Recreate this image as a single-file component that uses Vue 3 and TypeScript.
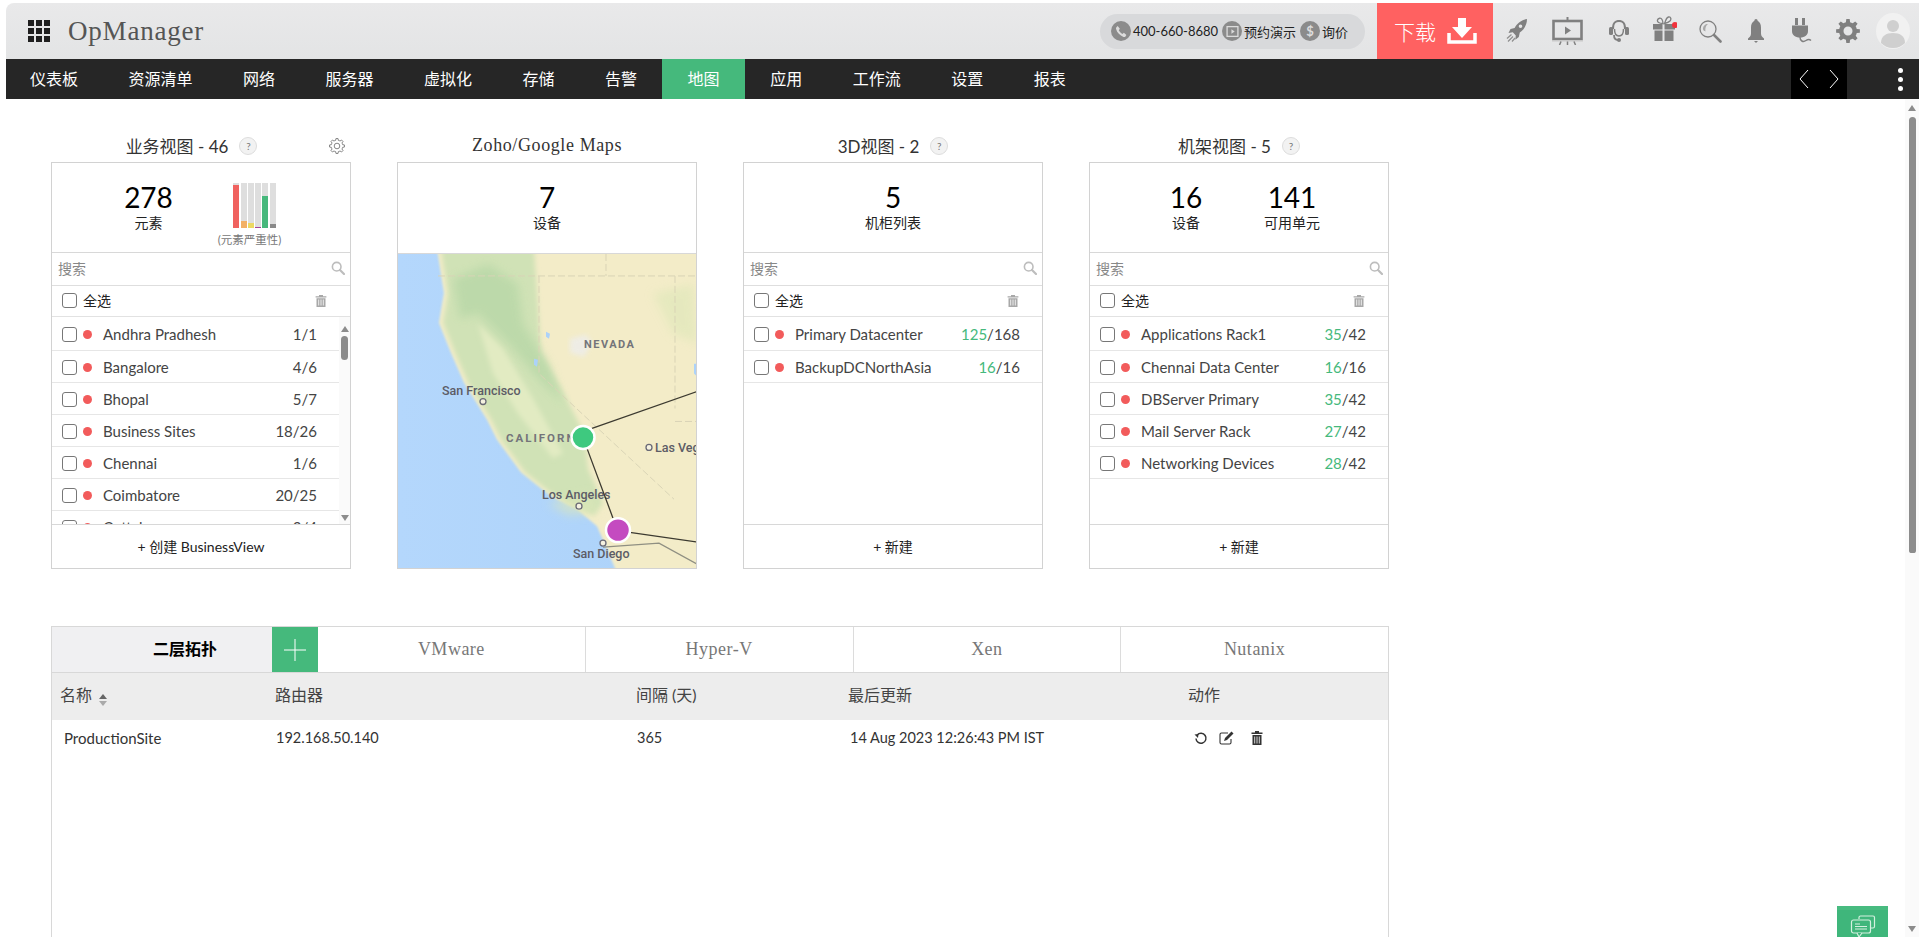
<script setup lang="ts">
interface Row {
  name: string
  used?: string
  total: string
}

interface Stat {
  value: string
  label: string
}

interface Card {
  title: string
  help: boolean
  stats: Stat[]
  rows: Row[]
  footer: string
}

const navItems = ['仪表板', '资源清单', '网络', '服务器', '虚拟化', '存储', '告警', '地图', '应用', '工作流', '设置', '报表']

const severity = [
  { color: '#f0625f', level: 96 },
  { color: '#f2b066', level: 15 },
  { color: '#ecd863', level: 12 },
  { color: '#a5429a', level: 2 },
  { color: '#47b87c', level: 71 },
  { color: '#8a8a8a', level: 8 },
]

const cards: Card[] = [
  {
    title: '3D视图 - 2',
    help: true,
    stats: [{ value: '5', label: '机柜列表' }],
    rows: [
      { name: 'Primary Datacenter', used: '125', total: '168' },
      { name: 'BackupDCNorthAsia', used: '16', total: '16' },
    ],
    footer: '+ 新建',
  },
  {
    title: '机架视图 - 5',
    help: true,
    stats: [
      { value: '16', label: '设备' },
      { value: '141', label: '可用单元' },
    ],
    rows: [
      { name: 'Applications Rack1', used: '35', total: '42' },
      { name: 'Chennai Data Center', used: '16', total: '16' },
      { name: 'DBServer Primary', used: '35', total: '42' },
      { name: 'Mail Server Rack', used: '27', total: '42' },
      { name: 'Networking Devices', used: '28', total: '42' },
    ],
    footer: '+ 新建',
  },
]

const businessRows: Row[] = [
  { name: 'Andhra Pradhesh', total: '1/1' },
  { name: 'Bangalore', total: '4/6' },
  { name: 'Bhopal', total: '5/7' },
  { name: 'Business Sites', total: '18/26' },
  { name: 'Chennai', total: '1/6' },
  { name: 'Coimbatore', total: '20/25' },
  { name: 'Cuttak', total: '3/4' },
]

const tabs = ['VMware', 'Hyper-V', 'Xen', 'Nutanix']

// gear outline, used by the toolbar and by the business view title
function gearPath(c: number, outer: number, inner: number, teeth: number) {
  const step = (Math.PI * 2) / teeth
  const pts: string[] = []
  for (let i = 0; i < teeth; i++) {
    const a = i * step
    const corners: [number, number][] = [
      [inner, a - step * 0.5],
      [inner, a - step * 0.3],
      [outer, a - step * 0.18],
      [outer, a + step * 0.18],
      [inner, a + step * 0.3],
    ]
    for (const [r, t] of corners) {
      pts.push(`${(c + r * Math.cos(t)).toFixed(2)} ${(c + r * Math.sin(t)).toFixed(2)}`)
    }
  }
  return `M${pts.join('L')}Z`
}

const gearBig = gearPath(12, 12, 9, 8) + 'M12 7.5a4.5 4.5 0 1 0 0 9a4.5 4.5 0 1 0 0-9Z'
const gearSmall = gearPath(8, 7.5, 5.8, 8)
</script>

<template>
  <div class="app">
    <svg class="defs" width="0" height="0">
      <symbol id="i-search" viewBox="0 0 14 14">
        <circle cx="5.7" cy="5.7" r="4.3" fill="none" stroke="#bdbdbd" stroke-width="1.6" />
        <path d="M9 9l4 4" stroke="#bdbdbd" stroke-width="2.2" stroke-linecap="round" />
      </symbol>
      <symbol id="i-trash" viewBox="0 0 12 13">
        <path d="M4 1h4v1.2h3.4v1.4H.6V2.2H4zM1.5 4.3h9V13h-9z" fill="#a8a8a8" />
        <path d="M3.7 5.5v6M6 5.5v6M8.3 5.5v6" stroke="#fff" stroke-width=".8" />
      </symbol>
    </svg>

    <header class="topbar">
      <div class="waffle"><i v-for="n in 9" :key="n"></i></div>
      <div class="brand">OpManager</div>

      <div class="contact">
        <span class="round">
          <svg viewBox="0 0 12 12" width="13" height="13"><path d="M2.5 1l2 2.5-1 1.3c.6 1.4 1.9 2.6 3.4 3.4l1.3-1 2.3 2-1 1.6c-.5.4-1 .4-1.7.2C4.500 9.800 2 7.300 1 3.800c-.2-.7-.1-1.300.3-1.800z" fill="#dcdcdc" /></svg>
        </span>
        <span class="phone">400-660-8680</span>
        <span class="round">
          <svg viewBox="0 0 12 12" width="13" height="13"><rect x="1" y="1.500" width="10" height="9" fill="none" stroke="#dcdcdc" stroke-width="1.200" /><path d="M5 4l3 2-3 2z" fill="#dcdcdc" /></svg>
        </span>
        <span class="contact-text">预约演示</span>
        <span class="round dollar">$</span>
        <span class="contact-text">询价</span>
      </div>

      <div class="download">
        <span>下载</span>
        <svg viewBox="0 0 30 26" width="30" height="26">
          <path d="M11 0h8v9h6L15 20 5 9h6z" fill="#fff" />
          <path d="M2 15v9h26v-9" fill="none" stroke="#fff" stroke-width="3.500" />
        </svg>
      </div>

      <div class="tools">
        <svg class="ic rocket" viewBox="0 0 21 24">
          <path fill-rule="evenodd" d="M21 0C15 1 11 4.500 8.600 9L4.500 10 2.500 14l4.300-.8 3 3.200-.5 4.300 3.500-2.800 1-4.300C18 10.500 21 6 21 0zM14.500 5.500a1.800 1.800 0 1 1 0 3.600 1.800 1.800 0 0 1 0-3.600z" />
          <path d="M5.500 15.500l-4.500 4M7 17.500l-5 5M9 19l-3 3.500" stroke="#909090" stroke-width="1.300" fill="none" />
        </svg>
        <svg class="ic screen" viewBox="0 0 31 28">
          <path d="M14.500 0h2v4h-2z" />
          <rect x="1.500" y="4" width="28" height="18" fill="none" stroke="#808080" stroke-width="2.600" />
          <path d="M13 9.500l6 4-6 4z" />
          <path d="M0 23h31v1.500H0z" fill="#c8c8c8" />
          <path d="M9 24.500l-1.500 3.500M15.500 24.500V28M22 24.500l1.500 3.500" stroke="#808080" stroke-width="1.500" fill="none" />
        </svg>
        <svg class="ic headset" viewBox="0 0 22 22">
          <path d="M5 9V7.500C5 3.500 7.500 1 11 1s6 2.500 6 6.500V9" fill="none" stroke="#808080" stroke-width="2.200" />
          <rect x="1" y="7" width="4" height="8" rx="1.500" />
          <rect x="17" y="7" width="4" height="8" rx="1.500" />
          <path d="M6.500 9c0 4 1.500 7 4.500 7s4.500-3 4.500-7" fill="none" stroke="#808080" stroke-width="1.500" />
          <path d="M6 15c0 3.500 1.500 5 4 5" fill="none" stroke="#808080" stroke-width="1.800" />
          <circle cx="11" cy="20" r="2" />
        </svg>
        <svg class="ic gift" viewBox="0 0 24 25">
          <path d="M10 7.500C6 7.500 4 6 4.500 4S8 1.500 9 3.500s1 4 1 4zM11.500 7.500c1.500-3 1.500-6 4-6.500s3 2.500 1.500 4-5.500 2.500-5.500 2.500z" fill="none" stroke="#808080" stroke-width="1.300" />
          <path d="M0 8h9.500v5.500H0zM11.500 8H22v5.500H11.500zM1.500 14.500h8V25h-8zM11.500 14.500h9V25h-9z" />
          <circle cx="22" cy="9" r="3" fill="#f0323c" />
        </svg>
        <svg class="ic lens" viewBox="0 0 23 23">
          <circle cx="9" cy="9" r="8" fill="none" stroke="#808080" stroke-width="1.300" />
          <path d="M4 9c0-3 2-5 5-5-1.500 1-3 3-2.500 7.500C5.500 11 4 10.500 4 9z" fill="#a8a8a8" />
          <path d="M15 15l6.500 6.500" stroke="#808080" stroke-width="2.600" stroke-linecap="round" />
        </svg>
        <svg class="ic bell" viewBox="0 0 22 24">
          <path d="M11 0c-1 0-1.600.8-1.600 1.800C7 3 6 5.500 6 8.500v6c0 2.500-1.500 3.500-3 5v1.500h16v-1.500c-1.500-1.500-3-2.500-3-5v-6c0-3-1-5.500-3.400-6.700C12.600.8 12 0 11 0zM9 22h4l-2 2z" />
        </svg>
        <svg class="ic plug" viewBox="0 0 23 26">
          <path d="M6 0h3v7H6zM13 0h3v7h-3zM3 7.500h16V13c0 4-3 6.500-8 6.500S3 17 3 13z" />
          <path d="M11 19c0 4 3 5.500 6 3.500 2-1.300 3.500-1.300 5 0" fill="none" stroke="#808080" stroke-width="1.500" />
        </svg>
        <svg class="ic cog" viewBox="0 0 24 24">
          <path fill-rule="evenodd" :d="gearBig" />
        </svg>
        <div class="avatar">
          <svg viewBox="0 0 34 36" width="34" height="36">
            <circle cx="17" cy="13" r="6" fill="#cfcfcf" />
            <path d="M5 30c0-7 5-10 12-10s12 3 12 10c-3 3-7 5-12 5s-9-2-12-5z" fill="#cfcfcf" />
          </svg>
        </div>
      </div>
    </header>

    <nav class="navbar">
      <a v-for="item in navItems" :key="item" :class="{ active: item === '地图' }">{{ item }}</a>
      <div class="nav-arrows">
        <svg viewBox="0 0 12 20" width="12" height="20"><path d="M10 1L2 10l8 9" fill="none" stroke="#fff" stroke-width="1" /></svg>
        <svg viewBox="0 0 12 20" width="12" height="20"><path d="M2 1l8 9-8 9" fill="none" stroke="#fff" stroke-width="1" /></svg>
      </div>
      <div class="nav-more"><i></i><i></i><i></i></div>
    </nav>

    <div class="body-row">
      <main class="content">
        <section class="cards">
          <!-- business view -->
          <div class="col">
            <div class="col-title with-gear">
              <span>业务视图 - 46</span>
              <span class="help">?</span>
              <svg class="title-gear" viewBox="0 0 16 16" width="16" height="16">
                <path :d="gearSmall" fill="none" stroke="#777" stroke-width=".9" />
                <circle cx="8" cy="8" r="2.800" fill="none" stroke="#777" stroke-width=".9" />
              </svg>
            </div>
            <div class="card">
              <div class="stats stats-wide">
                <div class="stat">
                  <div class="stat-value">278</div>
                  <div class="stat-label">元素</div>
                </div>
                <div class="stat">
                  <div class="bars">
                    <div v-for="(s, i) in severity" :key="i" class="bar">
                      <div class="bar-fill" :style="{ height: s.level + '%', background: s.color }"></div>
                    </div>
                  </div>
                  <div class="bars-label">(元素严重性)</div>
                </div>
              </div>
              <div class="search">
                <span>搜索</span>
                <svg width="14" height="14"><use href="#i-search" /></svg>
              </div>
              <div class="select-all">
                <span class="check"></span>
                <span>全选</span>
                <svg class="trash" width="12" height="13"><use href="#i-trash" /></svg>
              </div>
              <div class="list-wrap">
                <ul class="list">
                  <li v-for="row in businessRows" :key="row.name">
                    <span class="check"></span>
                    <span class="dot"></span>
                    <span class="row-name">{{ row.name }}</span>
                    <span class="row-count">{{ row.total }}</span>
                  </li>
                </ul>
                <div class="mini-scroll">
                  <span class="tri up"></span>
                  <span class="mini-thumb"></span>
                  <span class="tri down"></span>
                </div>
              </div>
              <div class="card-foot">+ 创建 BusinessView</div>
            </div>
          </div>

          <!-- map -->
          <div class="col">
            <div class="col-title slab">Zoho/Google Maps</div>
            <div class="card">
              <div class="stats map-stats">
                <div class="stat">
                  <div class="stat-value">7</div>
                  <div class="stat-label">设备</div>
                </div>
              </div>
              <svg class="map" viewBox="0 0 298 315" preserveAspectRatio="none">
                <defs>
                  <filter id="edge" x="-10%" y="-10%" width="120%" height="120%"><feGaussianBlur stdDeviation="1.200" /></filter>
                  <filter id="soft" x="-10%" y="-10%" width="120%" height="120%"><feGaussianBlur stdDeviation="2.500" /></filter>
                  <filter id="softer" x="-10%" y="-10%" width="120%" height="120%"><feGaussianBlur stdDeviation="5" /></filter>
                  <linearGradient id="sea" x1="0" x2="1" y1="0" y2="0">
                    <stop offset="0" stop-color="#b4d7fc" />
                    <stop offset="1" stop-color="#acd2f9" />
                  </linearGradient>
                </defs>
                <rect width="298" height="315" fill="url(#sea)" />
                <path filter="url(#edge)" d="M39 -5L46 39 41 69 53 99 66 129 89 166 99 186 123 219 153 243 179 256 199 273 209 296 219 320H310V-5Z" fill="#f3ecc8" />
                <path filter="url(#soft)" d="M43 -5L50 39 45 69 57 99 70 129 93 166 103 186 127 219 157 243 182 256 196 262 205 250 190 215 186 180 166 140 143 99 139 39 136 -5Z" fill="#d0e2b6" />
                <path filter="url(#softer)" d="M55 25L90 10 120 30 125 70 150 110 165 150 140 125 110 90 80 60 62 65Z" fill="#b9d8a8" opacity=".85" />
                <path filter="url(#soft)" d="M80 70L105 95 135 145 165 200 155 205 120 160 95 120Z" fill="#e2ebc2" />
                <path filter="url(#softer)" d="M255 40L295 30 300 90 275 80ZM150 250L195 240 200 260 170 262Z" fill="#dde7b8" opacity=".6" />
                <path d="M172 85l16-4 6 8-8 14-14-4z" fill="#ededed" filter="url(#soft)" opacity=".8" />
                <path d="M148 78l4 2-1 5-3-2zM136 105l4 1-1 7-3-2zM296 110l2 0v12l-2-2z" fill="#acd2f9" />
                <g fill="none" stroke="#d9d4b6" stroke-width="1" stroke-dasharray="7 3">
                  <path d="M40 22H298" />
                  <path d="M141 22V120L276 246" />
                  <path d="M277 22V155M277 168H298" />
                  <path d="M208 0V22" />
                </g>
                <text x="186" y="94" class="m-state">NEVADA</text>
                <text x="44" y="141" class="m-city">San Francisco</text>
                <circle cx="85" cy="148" r="3" class="m-pin" />
                <text x="108" y="189" class="m-state wide">CALIFORNIA</text>
                <circle cx="251" cy="194" r="3" class="m-pin" />
                <text x="257" y="199" class="m-city">Las Vegas</text>
                <text x="144" y="246" class="m-city">Los Angeles</text>
                <circle cx="181" cy="253" r="3" class="m-pin" />
                <circle cx="205" cy="290" r="3" class="m-pin" />
                <text x="175" y="305" class="m-city">San Diego</text>
                <path d="M205 294L261 290 299 311" fill="none" stroke="#8f8f82" stroke-width="1.300" />
                <path d="M194 175L299 138M189 195L215 265M230 279L299 289" fill="none" stroke="#3c3a30" stroke-width="1.300" />
                <circle cx="185" cy="184" r="11.500" fill="#3ec97f" stroke="#fff" stroke-width="2.500" />
                <circle cx="220" cy="277" r="12" fill="#c44bc0" stroke="#fff" stroke-width="2.500" />
              </svg>
            </div>
          </div>

          <!-- 3d and rack views -->
          <div v-for="card in cards" :key="card.title" class="col">
            <div class="col-title">
              <span>{{ card.title }}</span>
              <span v-if="card.help" class="help">?</span>
            </div>
            <div class="card">
              <div class="stats">
                <div v-for="s in card.stats" :key="s.label" class="stat">
                  <div class="stat-value">{{ s.value }}</div>
                  <div class="stat-label">{{ s.label }}</div>
                </div>
              </div>
              <div class="search">
                <span>搜索</span>
                <svg width="14" height="14"><use href="#i-search" /></svg>
              </div>
              <div class="select-all">
                <span class="check"></span>
                <span>全选</span>
                <svg class="trash" width="12" height="13"><use href="#i-trash" /></svg>
              </div>
              <div class="list-wrap">
                <ul class="list">
                  <li v-for="row in card.rows" :key="row.name">
                    <span class="check"></span>
                    <span class="dot"></span>
                    <span class="row-name">{{ row.name }}</span>
                    <span class="row-count"><em>{{ row.used }}</em>/{{ row.total }}</span>
                  </li>
                </ul>
              </div>
              <div class="card-foot">{{ card.footer }}</div>
            </div>
          </div>
        </section>

        <section class="topo">
          <div class="topo-tabs">
            <div class="topo-title">二层拓扑</div>
            <div class="topo-add">
              <svg viewBox="0 0 22 22" width="22" height="22"><path d="M11 0v22M0 11h22" stroke="#fff" stroke-width="1" /></svg>
            </div>
            <div v-for="t in tabs" :key="t" class="topo-tab">{{ t }}</div>
          </div>
          <div class="topo-head">
            <div>
              名称
              <span class="sort"><i class="s-up"></i><i class="s-down"></i></span>
            </div>
            <div>路由器</div>
            <div>间隔 (天)</div>
            <div>最后更新</div>
            <div>动作</div>
          </div>
          <div class="topo-row">
            <div class="first">ProductionSite</div>
            <div>192.168.50.140</div>
            <div>365</div>
            <div class="date">14 Aug 2023 12:26:43 PM IST</div>
            <div class="actions">
              <svg viewBox="0 0 14 14" width="14" height="14">
                <path d="M3.200 4A5 5 0 1 1 2 7.500" fill="none" stroke="#333" stroke-width="1.500" />
                <path d="M0.500 3.500l4 -.5-.5 4z" fill="#333" />
              </svg>
              <svg viewBox="0 0 15 14" width="15" height="14">
                <path d="M9 2H2.500C1.700 2 1 2.700 1 3.500v8C1 12.300 1.700 13 2.500 13h8c.8 0 1.500-.7 1.500-1.500V8" fill="none" stroke="#333" stroke-width="1.100" />
                <path d="M12.500 0.500l2 2L8 9l-3 1 1-3z" fill="#333" />
              </svg>
              <svg class="act-trash" viewBox="0 0 12 14" width="12" height="14">
                <path d="M4 0h4v1.500h3.500V3H.5V1.500H4zM1.500 4h9v10h-9z" fill="#333" />
                <path d="M3.700 5.500v7M6 5.500v7M8.300 5.500v7" stroke="#fff" stroke-width=".8" />
              </svg>
            </div>
          </div>
        </section>
      </main>

      <aside class="page-scroll">
        <span class="tri up"></span>
        <span class="page-thumb"></span>
        <span class="tri down"></span>
      </aside>
    </div>

    <div class="chat">
      <svg viewBox="0 0 26 26" width="26" height="26">
        <path d="M9 5V3.500C9 2.700 9.700 2 10.500 2H23c.8 0 1.500.7 1.500 1.500v9c0 .8-.7 1.500-1.500 1.500h-2" fill="none" stroke="#d5f0e0" stroke-width="1.200" />
        <rect x="1.500" y="6" width="19" height="13" rx="2" fill="#3fb67b" stroke="#d5f0e0" stroke-width="1.200" />
        <path d="M5 10h5M5 12.500h12M5 15h12" stroke="#d5f0e0" stroke-width="1" />
        <path d="M7 19l2 4 3-4" fill="#3fb67b" stroke="#d5f0e0" stroke-width="1.200" />
      </svg>
    </div>
  </div>
</template>

<style scoped>
.app {
  position: relative;
  display: flex;
  flex-direction: column;
  height: 937px;
  padding: 3px 0 0 6px;
  box-sizing: border-box;
  overflow: hidden;
  background: #fff;
  color: #333;
  font-family: Lato, 'Noto Sans CJK SC', sans-serif;
}
.defs {
  position: absolute;
}

/* top bar */
.topbar {
  display: flex;
  align-items: center;
  flex: none;
  height: 56px;
  padding-left: 22px;
  background: linear-gradient(#e9e9ea, #e3e4e5);
  border-top-left-radius: 8px;
}
.waffle {
  display: grid;
  grid-template-columns: repeat(3, 6px);
  gap: 2px;
  margin-right: 18px;
}
.waffle i {
  width: 6px;
  height: 6px;
  background: #1f1f1f;
}
.brand {
  font-family: 'Liberation Serif', serif;
  font-size: 27px;
  letter-spacing: 0.8px;
  color: #555;
}
.contact {
  display: flex;
  align-items: center;
  width: 265px;
  height: 35px;
  box-sizing: border-box;
  margin-left: auto;
  padding-left: 11px;
  border-radius: 18px;
  background: #d8d9db;
  font-size: 13px;
  color: #222;
}
.round {
  display: flex;
  align-items: center;
  justify-content: center;
  flex: none;
  width: 20px;
  height: 20px;
  border-radius: 50%;
  background: #8b8b8b;
}
.dollar {
  color: #dcdcdc;
  font-size: 13px;
  font-weight: 700;
}
.phone {
  margin: 0 4px 0 2px;
}
.contact-text {
  margin: 0 4px 0 2px;
}
.download {
  display: flex;
  align-items: center;
  gap: 11px;
  width: 116px;
  height: 56px;
  box-sizing: border-box;
  margin-left: 12px;
  padding-left: 17px;
  background: #ff6161;
  color: #fff;
  font-size: 21px;
  font-weight: 300;
}
.tools {
  display: flex;
  align-items: center;
  padding: 0 9px 0 13px;
}
.ic {
  flex: none;
  fill: #808080;
}
.rocket {
  width: 21px;
  height: 24px;
}
.screen {
  width: 31px;
  height: 28px;
  margin-left: 25px;
}
.headset {
  width: 22px;
  height: 22px;
  margin-left: 25px;
}
.gift {
  width: 24px;
  height: 25px;
  margin-left: 23px;
  margin-top: -6px;
}
.lens {
  width: 23px;
  height: 23px;
  margin-left: 22px;
}
.bell {
  width: 22px;
  height: 24px;
  margin-left: 23px;
}
.plug {
  width: 23px;
  height: 26px;
  margin-left: 22px;
}
.cog {
  width: 24px;
  height: 24px;
  margin-left: 24px;
}
.avatar {
  display: flex;
  align-items: flex-end;
  justify-content: center;
  width: 34px;
  height: 36px;
  margin-left: 16px;
  border-radius: 50%;
  background: #f1f1f1;
  overflow: hidden;
}

/* nav */
.navbar {
  display: flex;
  flex: none;
  align-items: stretch;
  height: 40px;
  background: #262626;
  color: #fff;
  font-size: 16px;
  line-height: 40px;
}
.navbar a {
  padding: 0 25.25px;
}
.navbar a:first-child {
  padding-left: 24px;
}
.navbar a.active {
  background: #45b97c;
}
.nav-arrows {
  display: flex;
  align-items: center;
  justify-content: space-between;
  width: 56px;
  box-sizing: border-box;
  margin-left: auto;
  padding: 0 7px;
  background: #000;
}
.nav-more {
  display: flex;
  flex-direction: column;
  align-items: center;
  justify-content: center;
  gap: 4px;
  width: 60px;
  box-sizing: border-box;
  padding-left: 46px;
  margin-right: 12px;
}
.nav-more i {
  width: 5px;
  height: 5px;
  border-radius: 50%;
  background: #fff;
}

/* page body */
.body-row {
  display: flex;
  flex: 1;
  min-height: 0;
}
.content {
  flex: 1;
  padding: 30px 0 0 45px;
  min-width: 0;
}
.cards {
  display: flex;
  gap: 46px;
}
.col {
  width: 300px;
}
.col-title {
  position: relative;
  display: flex;
  align-items: center;
  justify-content: center;
  gap: 11px;
  height: 33px;
  font-size: 17px;
  color: #333;
}
.col-title.with-gear {
  padding-right: 19px;
}
.col-title.slab {
  font-family: 'Liberation Serif', serif;
  font-size: 18px;
  letter-spacing: 0.6px;
}
.help {
  display: flex;
  align-items: center;
  justify-content: center;
  width: 18px;
  height: 18px;
  box-sizing: border-box;
  border: 1px solid #ddd;
  border-radius: 50%;
  background: #f2f2f2;
  color: #777;
  font-size: 10px;
}
.title-gear {
  position: absolute;
  right: 6px;
  top: 9px;
}
.card {
  display: flex;
  flex-direction: column;
  height: 407px;
  box-sizing: border-box;
  border: 1px solid #d2d2d2;
}
.stats {
  display: flex;
  justify-content: center;
  flex: none;
  height: 90px;
  box-sizing: border-box;
  border-bottom: 1px solid #d8d8d8;
  padding-top: 17px;
}
.map-stats {
  border-bottom: 0;
}
.stat {
  width: 106px;
  text-align: center;
}
.stats-wide {
  padding-right: 4px;
}
.stats-wide .stat {
  width: 101px;
}
.stat-value {
  height: 34px;
  font-size: 28px;
  line-height: 34px;
  color: #000;
}
.stat-label {
  height: 18px;
  font-size: 14px;
  line-height: 18px;
  color: #222;
}
.bars {
  display: flex;
  justify-content: center;
  gap: 1.3px;
  height: 45px;
  margin: 3px 0 0 10px;
}
.bar {
  display: flex;
  align-items: flex-end;
  width: 6px;
  background: #dedede;
}
.bar-fill {
  width: 100%;
}
.bars-label {
  margin-top: 4px;
  font-size: 11.500px;
  line-height: 16px;
  color: #777;
  white-space: nowrap;
}
.search {
  display: flex;
  align-items: center;
  justify-content: space-between;
  flex: none;
  height: 33px;
  box-sizing: border-box;
  padding: 0 5px 2px 6px;
  border-bottom: 1px solid #dedede;
  font-size: 14px;
  color: #888;
}
.select-all {
  display: flex;
  align-items: center;
  flex: none;
  height: 31px;
  box-sizing: border-box;
  padding: 0 0 2px 10px;
  border-bottom: 1px solid #e2e2e2;
  font-size: 14px;
  color: #222;
}
.select-all .check {
  margin-right: 6px;
}
.trash {
  margin-left: auto;
  margin-right: 23px;
}
.check {
  flex: none;
  width: 15px;
  height: 15px;
  box-sizing: border-box;
  border: 1px solid #777;
  border-radius: 3px;
  background: #fff;
}
.list-wrap {
  display: flex;
  flex: 1;
  min-height: 0;
  overflow: hidden;
}
.list {
  flex: 1;
  min-width: 0;
  margin: 0;
  padding: 0;
  list-style: none;
}
.list li {
  display: flex;
  align-items: center;
  height: 32px;
  box-sizing: border-box;
  padding: 1px 22px 0 10px;
  border-bottom: 1px solid #e6e6e6;
  font-size: 15px;
  color: #444;
}
.list li:first-child {
  height: 34px;
}
.dot {
  flex: none;
  width: 9px;
  height: 9px;
  margin-left: 6px;
  border-radius: 50%;
  background: #f25b5b;
}
.row-name {
  margin-left: 11px;
  white-space: nowrap;
}
.row-count {
  margin-left: auto;
  white-space: nowrap;
}
.row-count em {
  font-style: normal;
  color: #45b97c;
}
.mini-scroll {
  display: flex;
  flex-direction: column;
  align-items: center;
  flex: none;
  width: 11px;
  padding-top: 9px;
  background: #fafafa;
}
.mini-thumb {
  width: 7px;
  height: 24px;
  margin-top: 4px;
  border-radius: 4px;
  background: #8c8c8c;
}
.mini-scroll .down {
  margin-top: auto;
  margin-bottom: 3px;
}
.tri {
  width: 0;
  height: 0;
  border-left: 4px solid transparent;
  border-right: 4px solid transparent;
}
.tri.up {
  border-bottom: 6px solid #8c8c8c;
}
.tri.down {
  border-top: 6px solid #8c8c8c;
}
.card-foot {
  flex: none;
  height: 44px;
  box-sizing: border-box;
  border-top: 1px solid #d8d8d8;
  font-size: 14px;
  line-height: 44px;
  text-align: center;
  color: #222;
}
.map {
  display: block;
  flex: 1;
  min-height: 0;
  width: 100%;
  border-top: 1px solid #d8d8d8;
  box-sizing: border-box;
}
.m-city {
  font-family: Roboto, sans-serif;
  font-size: 12.500px;
  font-weight: 500;
  fill: #5c5c66;
}
.m-state {
  font-family: Roboto, sans-serif;
  font-size: 11px;
  font-weight: 700;
  letter-spacing: 1.500px;
  fill: #74747a;
}
.m-state.wide {
  font-size: 11.500px;
  letter-spacing: 2px;
}
.m-pin {
  fill: #f5f2e0;
  stroke: #6a6a76;
  stroke-width: 1.300;
}

/* layer 2 table */
.topo {
  width: 1338px;
  height: 400px;
  box-sizing: border-box;
  margin-top: 57px;
  border: 1px solid #d8d8d8;
}
.topo-tabs {
  display: flex;
  height: 45px;
  border-bottom: 1px solid #d8d8d8;
}
.topo-title {
  flex: none;
  width: 220px;
  padding-left: 46px;
  box-sizing: border-box;
  background: #f0f0f2;
  font-size: 16px;
  font-weight: 700;
  line-height: 44px;
  text-align: center;
  color: #000;
}
.topo-add {
  display: flex;
  align-items: center;
  justify-content: center;
  flex: none;
  width: 46px;
  background: #45b97c;
}
.topo-tab {
  flex: 1;
  border-left: 1px solid #dcdcdc;
  font-family: 'Liberation Serif', serif;
  font-size: 18px;
  letter-spacing: 0.5px;
  line-height: 44px;
  text-align: center;
  color: #777;
}
.topo-add + .topo-tab {
  border-left: 0;
}
.topo-head,
.topo-row {
  display: grid;
  grid-template-columns: 223px 361px 212px 340px 1fr;
  align-items: center;
}
.topo-head {
  height: 47px;
  box-sizing: border-box;
  padding-bottom: 6px;
  background: #ededed;
  font-size: 16px;
  color: #444;
}
.topo-head > div:first-child {
  padding-left: 8px;
}
.topo-row {
  height: 35px;
  font-size: 14.500px;
  color: #333;
}
.topo-row > div {
  padding-left: 1px;
}
.topo-row .first {
  padding-left: 12px;
  font-size: 15px;
}
.topo-row .date {
  padding-left: 2px;
}
.topo-row .actions {
  display: flex;
  align-items: center;
  gap: 10.5px;
  padding-left: 6px;
}
.act-trash {
  margin-left: 7px;
}
.sort {
  display: inline-flex;
  flex-direction: column;
  gap: 2px;
  margin-left: 3px;
  vertical-align: 2px;
}
.sort i {
  width: 0;
  height: 0;
  border-left: 4px solid transparent;
  border-right: 4px solid transparent;
}
.s-up {
  border-bottom: 5px solid #666;
}
.s-down {
  border-top: 5px solid #aaa;
}

/* window scrollbar */
.page-scroll {
  display: flex;
  flex-direction: column;
  align-items: center;
  flex: none;
  width: 14px;
  padding: 6px 0 5px;
  box-sizing: border-box;
  background: #fafafa;
}
.page-thumb {
  width: 7px;
  height: 436px;
  margin-top: 6px;
  border-radius: 4px 4px 3px 3px;
  background: #8c8c8c;
}
.page-scroll .down {
  margin-top: auto;
}

.chat {
  position: absolute;
  left: 1837px;
  top: 906px;
  display: flex;
  justify-content: center;
  width: 51px;
  height: 31px;
  padding-top: 4px;
  box-sizing: border-box;
  border-top: 4px solid #48bb80;
  background: #3fb67b;
  overflow: hidden;
}
</style>

<style>
html,
body {
  margin: 0;
  overflow: hidden;
}
</style>
